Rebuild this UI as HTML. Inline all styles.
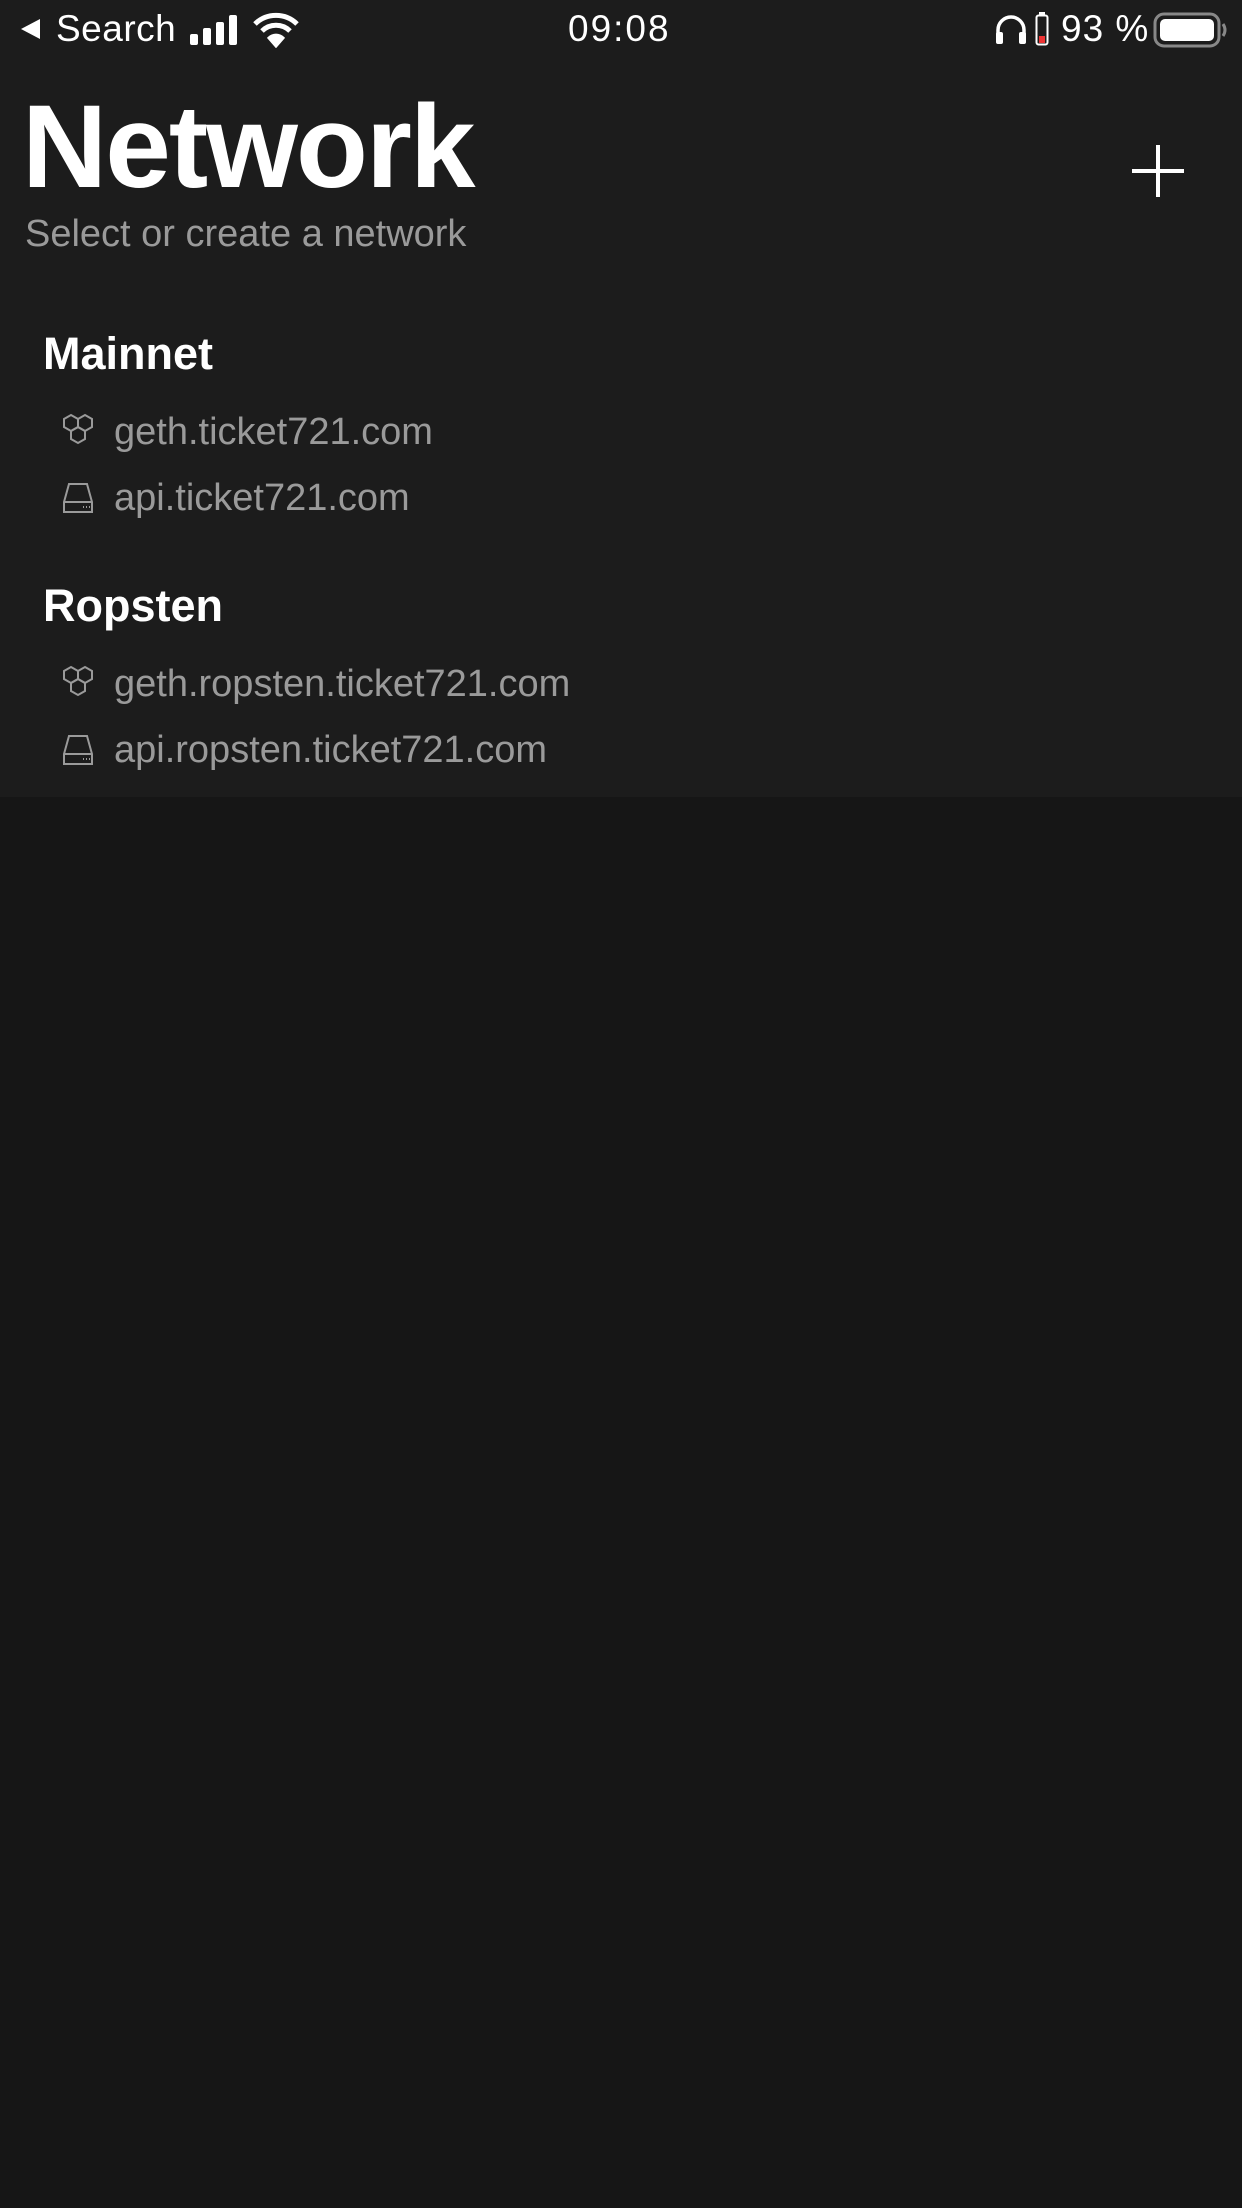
<!DOCTYPE html>
<html><head><meta charset="utf-8"><style>
*{margin:0;padding:0;box-sizing:border-box}
body{width:1242px;height:2208px;background:#161616;font-family:"Liberation Sans",sans-serif;position:relative;overflow:hidden;color:#fff}
#top{position:absolute;left:0;top:0;width:1242px;height:797px;background:#1c1c1c}
.t{position:absolute;white-space:nowrap;line-height:1}
.g{color:#9a9a9a;font-size:38px}
.h{font-size:45px;font-weight:bold}
svg{position:absolute}
</style></head><body>
<div id="top"></div>
<!-- status bar -->
<svg style="left:18px;top:16px" width="26" height="26" viewBox="0 0 26 26"><path d="M22 3 L3 13 L22 23Z" fill="#fff"/></svg>
<div class="t" style="left:56px;top:10px;font-size:37px;letter-spacing:0.5px">Search</div>
<svg style="left:188px;top:14px" width="56" height="32" viewBox="0 0 56 32"><rect x="2" y="20" width="8" height="11" rx="2" fill="#fff"/><rect x="15" y="14" width="8" height="17" rx="2" fill="#fff"/><rect x="28" y="8" width="8" height="23" rx="2" fill="#fff"/><rect x="41" y="1" width="8" height="30" rx="2" fill="#fff"/></svg>
<svg style="left:252px;top:12px" width="48" height="36" viewBox="0 0 48 36"><path d="M3 12 A30 30 0 0 1 45 12" stroke="#fff" stroke-width="5" fill="none"/><path d="M10 19 A20 20 0 0 1 38 19" stroke="#fff" stroke-width="5" fill="none"/><path d="M17 26 A10 10 0 0 1 31 26 L24 34Z" fill="#fff" stroke="#fff" stroke-width="3"/></svg>
<div class="t" style="left:568px;top:10px;font-size:37px;letter-spacing:2px">09:08</div>
<svg style="left:994px;top:14px" width="34" height="32" viewBox="0 0 34 32"><path d="M4 28 V16 A13 13 0 0 1 30 16 V28" stroke="#fff" stroke-width="3.5" fill="none"/><rect x="2" y="18" width="7" height="12" rx="2" fill="#fff"/><rect x="25" y="18" width="7" height="12" rx="2" fill="#fff"/></svg>
<svg style="left:1035px;top:12px" width="14" height="34" viewBox="0 0 14 34"><rect x="4" y="0" width="6" height="3" fill="#fff"/><rect x="1.5" y="3.5" width="11" height="29" rx="2" stroke="#fff" stroke-width="2" fill="none"/><rect x="4" y="24" width="6" height="7" fill="#e33"/></svg>
<div class="t" style="left:1061px;top:10px;font-size:37px;letter-spacing:1px">93 %</div>
<svg style="left:1153px;top:12px" width="76" height="36" viewBox="0 0 76 36"><rect x="2" y="2" width="64" height="32" rx="9" stroke="#888" stroke-width="3" fill="none"/><rect x="7" y="7" width="54" height="22" rx="5" fill="#fff"/><path d="M70 12 Q74 18 70 24" stroke="#888" stroke-width="3" fill="none"/></svg>
<!-- header -->
<div class="t" style="left:22px;top:88px;font-size:118px;font-weight:bold;letter-spacing:-2px">Network</div>
<div class="t" style="left:25px;top:215px;font-size:38px;color:#9a9a9a">Select or create a network</div>
<svg style="left:1130px;top:143px" width="56" height="56" viewBox="0 0 56 56"><path d="M28 2V54M2 28H54" stroke="#fff" stroke-width="4"/></svg>
<!-- sections -->
<div class="t h" style="left:43px;top:331px">Mainnet</div>
<svg style="left:61px;top:413px" width="34" height="36" viewBox="0 0 34 36" fill="none" stroke="#9a9a9a" stroke-width="2"><path d="M10 2 L17 6 L17 14 L10 18 L3 14 L3 6Z"/><path d="M24 2 L31 6 L31 14 L24 18 L17 14 L17 6Z"/><path d="M17 14 L24 18 L24 26 L17 30 L10 26 L10 18Z"/></svg>
<div class="t g" style="left:114px;top:413px">geth.ticket721.com</div>
<svg style="left:62px;top:482px" width="32" height="32" viewBox="0 0 32 32" fill="none" stroke="#9a9a9a" stroke-width="2"><path d="M7 2 H25 L30 20 V30 H2 V20 Z"/><path d="M2 20 H30"/><path d="M21 25 h1 M24 25 h1 M27 25 h1"/></svg>
<div class="t g" style="left:114px;top:479px">api.ticket721.com</div>
<div class="t h" style="left:43px;top:583px">Ropsten</div>
<svg style="left:61px;top:665px" width="34" height="36" viewBox="0 0 34 36" fill="none" stroke="#9a9a9a" stroke-width="2"><path d="M10 2 L17 6 L17 14 L10 18 L3 14 L3 6Z"/><path d="M24 2 L31 6 L31 14 L24 18 L17 14 L17 6Z"/><path d="M17 14 L24 18 L24 26 L17 30 L10 26 L10 18Z"/></svg>
<div class="t g" style="left:114px;top:665px">geth.ropsten.ticket721.com</div>
<svg style="left:62px;top:734px" width="32" height="32" viewBox="0 0 32 32" fill="none" stroke="#9a9a9a" stroke-width="2"><path d="M7 2 H25 L30 20 V30 H2 V20 Z"/><path d="M2 20 H30"/><path d="M21 25 h1 M24 25 h1 M27 25 h1"/></svg>
<div class="t g" style="left:114px;top:731px">api.ropsten.ticket721.com</div>
</body></html>
